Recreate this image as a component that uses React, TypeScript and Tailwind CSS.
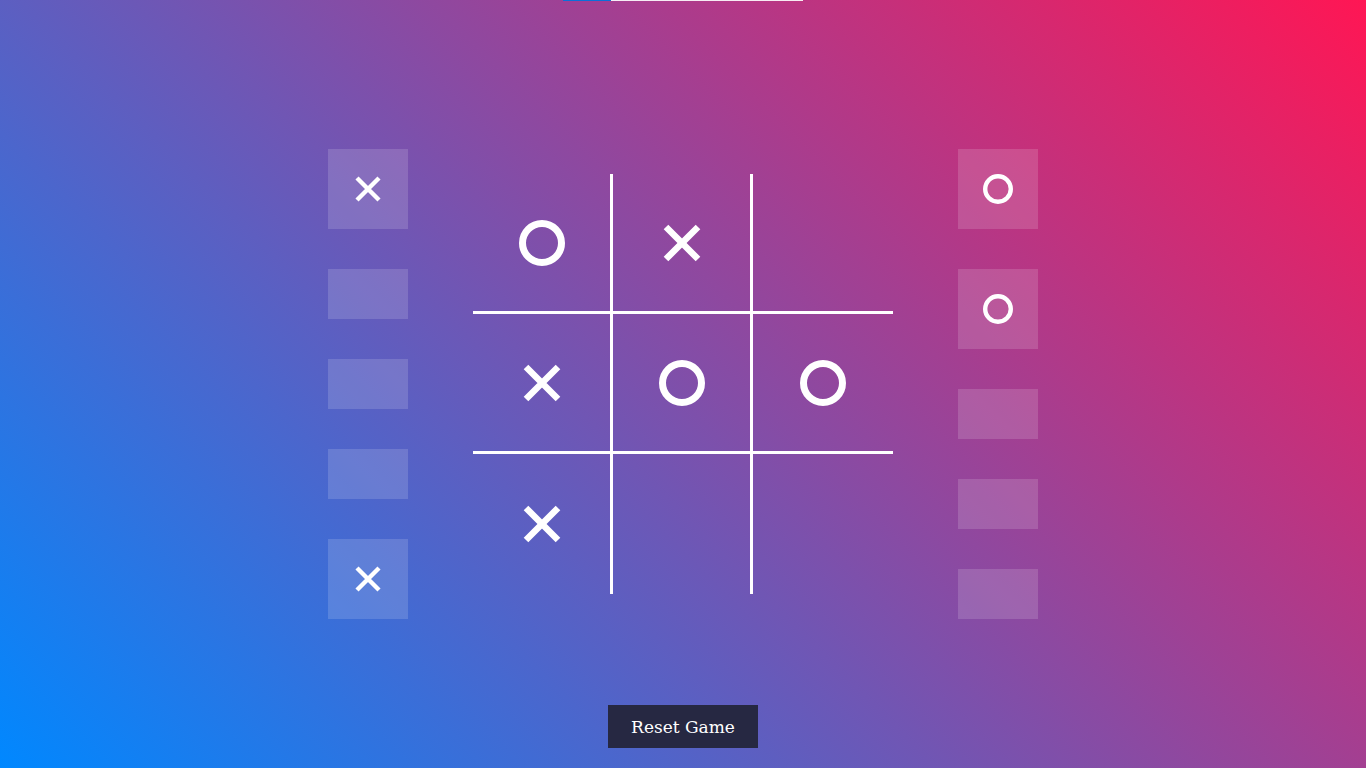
import React from "react";

type Mark = "X" | "O" | null;

function BigO() {
  return (
    <svg width="46" height="46" viewBox="0 0 46 46">
      <circle cx="23" cy="23" r="19.5" fill="none" stroke="white" strokeWidth="7" />
    </svg>
  );
}

function BigX() {
  return (
    <svg width="38" height="38" viewBox="0 0 38 38">
      <path d="M3 3 L35 35 M35 3 L3 35" stroke="white" strokeWidth="6.5" />
    </svg>
  );
}

function SmallX() {
  return (
    <svg width="28" height="28" viewBox="0 0 28 28">
      <path d="M3 3 L25 25 M25 3 L3 25" stroke="white" strokeWidth="4.4" />
    </svg>
  );
}

function SmallO() {
  return (
    <svg width="30" height="30" viewBox="0 0 30 30">
      <circle cx="15" cy="15" r="12.8" fill="none" stroke="white" strokeWidth="4.4" />
    </svg>
  );
}

// pieces left in hand for each player
function PieceColumn({ kind }: { kind: "X" | "O" }) {
  const slots = [0, 1, 2, 3, 4];
  return (
    <div className="flex flex-col gap-10">
      {slots.map((i) => {
        const filled = kind === "X" ? i === 0 || i === 4 : i < 2;
        return (
          <div
            key={i}
            className={
              filled
                ? "w-20 h-20 bg-white/15 flex items-center justify-center"
                : "w-20 h-[50px] bg-white/15"
            }
          >
            {filled && (kind === "X" ? <SmallX /> : <SmallO />)}
          </div>
        );
      })}
    </div>
  );
}

export default function App() {
  const board: Mark[] = ["O", "X", null, "X", "O", "O", "X", null, null];

  return (
    <div className="h-screen w-full flex flex-col items-center overflow-hidden bg-[linear-gradient(45deg,#0088ff,#ff1654)]">
      {/* progress strip */}
      <div className="w-[240px] h-px bg-white/90 flex shrink-0">
        <div className="w-[48px] h-px bg-[#0b6fd8]" />
      </div>

      <div className="flex-1 w-full pt-[62px] flex items-center justify-center gap-[65px]">
        <PieceColumn kind="X" />

        <div className="grid grid-cols-[140px_140px_140px] grid-rows-[140px_140px_140px]">
          {board.map((cell, idx) => {
            const col = idx % 3;
            const row = Math.floor(idx / 3);
            return (
              <div
                key={idx}
                className={
                  "flex items-center justify-center border-white " +
                  (col < 2 ? "border-r-[3px] " : "") +
                  (row < 2 ? "border-b-[3px]" : "")
                }
              >
                {cell === "O" && <BigO />}
                {cell === "X" && <BigX />}
              </div>
            );
          })}
        </div>

        <PieceColumn kind="O" />
      </div>

      <button className="mb-5 w-[150px] h-[43px] shrink-0 bg-[#262842] text-white text-[17px] pt-[3px] font-['DejaVu_Serif',serif] cursor-pointer">
        Reset Game
      </button>
    </div>
  );
}
